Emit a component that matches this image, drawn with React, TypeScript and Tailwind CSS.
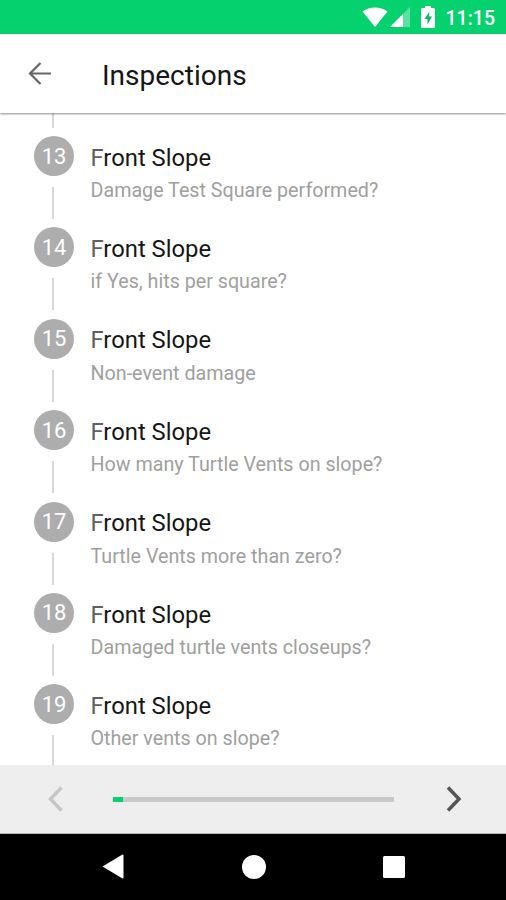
import React from 'react';

interface Step {
  id: number;
  title: string;
  question: string;
}

const steps: Step[] = [
  { id: 13, title: 'Front Slope', question: 'Damage Test Square performed?' },
  { id: 14, title: 'Front Slope', question: 'if Yes, hits per square?' },
  { id: 15, title: 'Front Slope', question: 'Non-event damage' },
  { id: 16, title: 'Front Slope', question: 'How many Turtle Vents on slope?' },
  { id: 17, title: 'Front Slope', question: 'Turtle Vents more than zero?' },
  { id: 18, title: 'Front Slope', question: 'Damaged turtle vents closeups?' },
  { id: 19, title: 'Front Slope', question: 'Other vents on slope?' },
];

const StatusBar: React.FC = () => (
  <div className="flex h-[34px] shrink-0 items-center justify-end bg-[#05d26e] pr-[11px] text-white">
    <svg width="26" height="20" viewBox="0 0 26 20" fill="currentColor">
      <path d="M.5 4.500C8-1 18-1 25.500 4.500L13 20z" />
    </svg>
    <svg width="20" height="20" viewBox="0 0 20 20" fill="currentColor" className="ml-[2px]">
      <path d="M20 0v20H0z" opacity="0.35" />
      <path d="M13 7v13H0z" />
    </svg>
    <svg width="14" height="22" viewBox="0 0 14 22" className="ml-[11px]">
      <path d="M4 0h6v2h2.500q1.500 0 1.500 1.500v17q0 1.500-1.500 1.500h-11Q0 22 0 20.500v-17Q0 2 1.500 2H4z" fill="white" />
      <path d="M8.500 5.500L3.500 13h3v5.500l4.500-8H8z" fill="#05b862" />
    </svg>
    <span className="mt-[3px] ml-[11px] text-[19.500px] leading-none font-medium">11:15</span>
  </div>
);

const Header: React.FC = () => (
  <header className="relative z-10 flex h-[79px] shrink-0 items-center bg-white pl-[28px] shadow-[0_1px_2px_rgba(0,0,0,0.450)]">
    <svg width="24" height="24" viewBox="0 0 24 24" fill="none" stroke="#666" strokeWidth="2.200">
      <path d="M23 11.500H2.500M12.500 1L2 11.500 12.500 22" />
    </svg>
    <h1 className="mt-[4px] ml-[50px] text-[28px] leading-none text-[#161616]">Inspections</h1>
  </header>
);

const StepRow: React.FC<{ step: Step }> = ({ step }) => (
  <li className="flex h-[91.400px] shrink-0 gap-[16.500px] pl-[34px]">
    <div className="flex w-[40px] shrink-0 flex-col items-center">
      <div className="flex size-[40px] shrink-0 items-center justify-center rounded-full bg-[#adadad] pt-px text-[22px] leading-none text-white">
        {step.id}
      </div>
      <div className="mt-[11px] mr-[2px] h-[32px] w-[2.500px] shrink-0 bg-[#d8d8d8]" />
    </div>
    <div className="pt-[7.600px]">
      <h2 className="text-[23.800px] leading-[28px] text-[#161616] first-letter:text-[#606060]">{step.title}</h2>
      <p className="mt-[7.400px] text-[19.700px] leading-[24px] text-[#a0a0a0]">{step.question}</p>
    </div>
  </li>
);

const Pager: React.FC = () => (
  <div className="flex h-[69px] shrink-0 items-center border-b border-[#b5b5b5] bg-[#eeeeee] pl-[47px]">
    <svg width="16" height="26" viewBox="0 0 16 26" fill="none" stroke="#c6c6c6" strokeWidth="3.500">
      <path d="M14.500 1.500L3.500 13l11 11.500" />
    </svg>
    <div className="ml-[50px] h-[5px] w-[281px] bg-[#c8c8c8]">
      <div className="h-full w-[10px] bg-[#05d26e]" />
    </div>
    <svg width="16" height="26" viewBox="0 0 16 26" fill="none" stroke="#555" strokeWidth="3.500" className="ml-[52px]">
      <path d="M2 1.500L13 13 2 24.500" />
    </svg>
  </div>
);

const NavBar: React.FC = () => (
  <div className="flex flex-1 items-center bg-black pb-px pl-[102px] text-white">
    <svg width="22" height="25" viewBox="0 0 22 25" fill="currentColor">
      <path d="M.5 12.500L20.500.5q1 0 1 1v22q0 1-1 1z" />
    </svg>
    <div className="ml-[117.500px] size-[24px] rounded-full bg-white" />
    <div className="ml-[117.500px] size-[22px] rounded-[1.500px] bg-white" />
  </div>
);

const App: React.FC = () => {
  return (
    <div className="flex h-[900px] w-[506px] flex-col overflow-hidden bg-white font-[Roboto,sans-serif]">
      <StatusBar />
      <Header />
      <main className="flex h-[652px] shrink-0 flex-col overflow-hidden">
        <div className="mb-[8px] ml-[51.500px] h-[15px] w-[2.500px] shrink-0 bg-[#d8d8d8]" />
        <ul className="flex flex-col">
          {steps.map((step) => (
            <StepRow key={step.id} step={step} />
          ))}
        </ul>
      </main>
      <Pager />
      <NavBar />
    </div>
  );
};

export default App;
